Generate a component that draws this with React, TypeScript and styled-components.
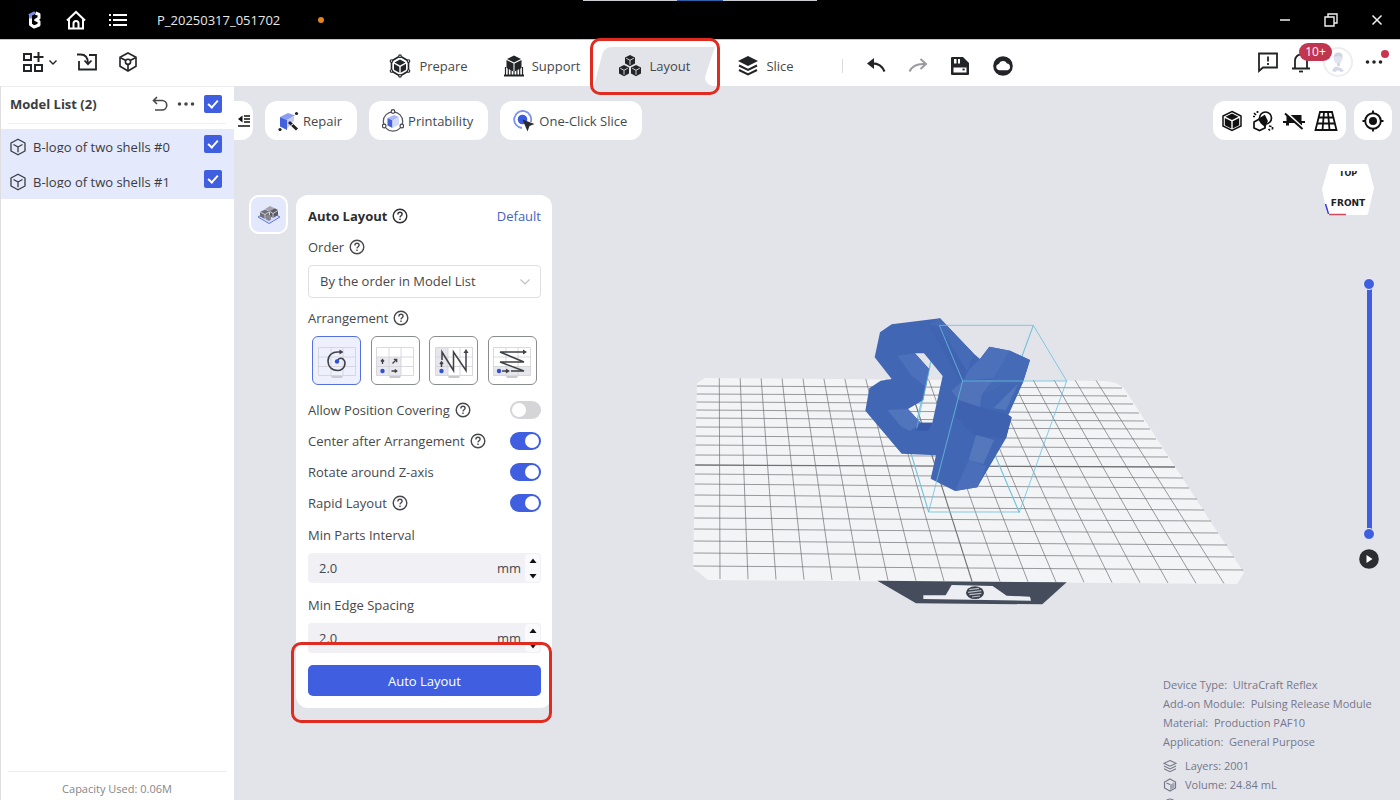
import React, { useState } from "react";
import styled, { createGlobalStyle, css } from "styled-components";

const blue = "#3f5fe0";
const ink = "#232427";
const canvas = "#e3e4ea";

const GlobalStyle = createGlobalStyle`
  *, *::before, *::after { box-sizing: border-box; }
  body { margin: 0; font-family: "Open Sans", "Noto Sans", sans-serif; font-size: 13px; line-height: 18px; color: #47484c; background: ${canvas}; }
  button, input, select { font: inherit; color: inherit; margin: 0; }
  button { border: 0; background: none; padding: 0; cursor: pointer; display: inline-flex; align-items: center; justify-content: center; }
  svg { display: block; flex: none; }
  h1, h2, p, ul, dl, dd { margin: 0; padding: 0; }
`;

const Shell = styled.div`
  height: 100vh;
  display: flex;
  flex-direction: column;
  overflow: hidden;
`;

const TitleBar = styled.header`
  position: relative;
  flex: none;
  height: 39px;
  display: flex;
  align-items: center;
  background: #000;
  color: #e8e8e8;
  padding: 0 16px 0 26px;
`;

const CaptureStrip = styled.div`
  position: absolute;
  top: 0;
  left: 50%;
  width: 234px;
  height: 1px;
  margin-left: -117px;
  background: linear-gradient(90deg, #c9cdd1 40%, #2d5fa8 40%, #2d5fa8 60%, #c9cdd1 60%);
`;

const TitleActions = styled.div`
  display: flex;
  align-items: center;
  gap: 21px;
  color: #fff;
`;

const ProjectName = styled.h1`
  font-size: 13px;
  font-weight: 400;
  margin-left: 29px;
`;

const UnsavedDot = styled.span`
  width: 6px;
  height: 6px;
  border-radius: 50%;
  background: #e58420;
  margin-left: 38px;
`;

const WindowActions = styled.div`
  display: flex;
  gap: 32px;
  margin-left: auto;
  color: #f2f2f2;
`;

const Toolbar = styled.div`
  position: relative;
  z-index: 2;
  flex: none;
  height: 47px;
  display: grid;
  grid-template-columns: 1fr auto 1fr;
  background: #fff;
  border-top: 1px solid #c8c8c8;
  color: ${ink};
`;

const FileTools = styled.div`
  display: flex;
  align-items: center;
  gap: 18px;
  padding: 0 0 2px 22px;
`;

const MainNav = styled.nav`
  display: flex;
  align-items: flex-end;
  padding-right: 19px;
`;

const Tab = styled.button<{ $active?: boolean }>`
  position: relative;
  height: 39px;
  gap: 8px;
  padding: 0 14px 1px 22px;
  color: #47484c;
  ${(p) => p.$active && css`padding: 0 26px 1px 25px;`}
  svg { position: relative; color: ${ink}; }
`;

const TabShape = styled.span`
  position: absolute;
  inset: 0;
  svg { width: 100%; height: 100%; }
  & ~ span { position: relative; }
`;

const Highlight = styled.i<{ $inset: string }>`
  position: absolute;
  z-index: 3;
  inset: ${(p) => p.$inset};
  border: 3px solid #df2b20;
  border-radius: 10px;
  pointer-events: none;
`;

const QuickActions = styled.div`
  display: flex;
  align-items: center;
  gap: 22px;
  height: 39px;
  margin-left: 34px;
  padding: 0 0 1px 24px;
  background: linear-gradient(#dcdcdc, #dcdcdc) no-repeat left 12px / 1px 14px;
`;

const AccountTools = styled.div`
  display: flex;
  align-items: center;
  justify-content: flex-end;
  gap: 12px;
  padding: 0 17px 2px 0;
`;

const Badged = styled.button`
  position: relative;
`;

const CountBadge = styled.span`
  position: absolute;
  z-index: 1;
  left: 8px;
  top: -8px;
  width: 33px;
  border-radius: 9px;
  background: #c2354f;
  color: #fff;
  font-size: 12px;
`;

const AlertDot = styled.span`
  position: absolute;
  right: -6px;
  top: -3px;
  width: 8px;
  height: 8px;
  border-radius: 50%;
  background: #c9354f;
`;

const Avatar = styled.button`
  width: 30px;
  height: 30px;
  border: 2px solid #ededf2;
  border-radius: 50%;
`;

const Body = styled.div`
  flex: 1;
  min-height: 0;
  display: grid;
  grid-template-columns: 234px 1fr;
`;

const Sidebar = styled.aside`
  display: flex;
  flex-direction: column;
  min-height: 0;
  background: #fff;
  border-top: 1px solid #ededed;
  border-left: 1px solid #dedee2;
`;

const SidebarHead = styled.div`
  display: flex;
  align-items: center;
  gap: 9px;
  height: 37px;
  margin: 0 8px 5px 7px;
  padding: 0 4px 2px 2px;
  border-bottom: 1px solid #f0f0f0;
  h2 { flex: 1; font-size: 13px; font-weight: 700; color: #3b3c40; }
`;

const Check = styled.input`
  appearance: none;
  position: relative;
  flex: none;
  width: 18px;
  height: 18px;
  border-radius: 2px;
  background: ${blue};
  &:not(:checked) { background: #fff; border: 1px solid #b8bac4; }
  &:checked::after {
    content: "";
    position: absolute;
    left: 6px;
    top: 3px;
    width: 6px;
    height: 10px;
    border: solid #fff;
    border-width: 0 2px 2px 0;
    transform: rotate(42deg);
  }
`;

const ModelRow = styled.label`
  display: flex;
  align-items: center;
  gap: 6px;
  height: 35px;
  padding: 0 12px 0 8px;
  background: #e4e9fb;
  color: #3a3b41;
  ${Check} { margin-bottom: 5px; }
`;

const ModelName = styled.span`
  flex: 1;
  height: 13px;
  line-height: 14px;
  overflow: hidden;
  white-space: nowrap;
`;

const Capacity = styled.p`
  margin: auto 8px 0 7px;
  height: 29px;
  padding-top: 8px;
  border-top: 1px solid #ececec;
  font-size: 11px;
  text-align: center;
  color: #85868a;
`;

const Viewport = styled.main`
  display: grid;
  grid-template: minmax(0, 1fr) / minmax(0, 1fr);
  min-height: 0;
  background: ${canvas};
`;

const SceneLayer = styled.svg`
  grid-area: 1 / 1;
  width: 100%;
  height: 100%;
`;

const Overlay = styled.div`
  grid-area: 1 / 1;
  position: relative;
  display: flex;
  flex-direction: column;
  gap: 24px;
  padding: 15px 8px 0 0;
  min-height: 0;
`;

const ActionRow = styled.div`
  display: flex;
  gap: 12px;
`;

const Collapse = styled.button`
  width: 19px;
  height: 39px;
  background: #fff;
  border-radius: 0 12px 12px 0;
  color: #111;
`;

const Pill = styled.button`
  height: 39px;
  gap: 4px;
  padding: 0 15px 0 13px;
  border-radius: 12px;
  background: #fff;
  white-space: nowrap;
`;

const ViewTools = styled.div`
  display: flex;
  gap: 8px;
  margin-left: auto;
`;

const ToolGroup = styled.div`
  display: flex;
  align-items: center;
  gap: 9px;
  height: 39px;
  padding: 0 8px;
  border-radius: 12px;
  background: #fff;
  color: #111;
`;

const Workspace = styled.div`
  display: flex;
  justify-content: space-between;
  align-items: flex-start;
`;

const ToolArea = styled.div`
  display: flex;
  align-items: flex-start;
  gap: 8px;
  padding: 31px 0 0 15px;
`;

const ToolButton = styled.button`
  width: 39px;
  height: 39px;
  border: 2px solid #fff;
  border-radius: 10px;
  background: #e3e8fc;
`;

const Panel = styled.form`
  width: 256px;
  border-radius: 12px;
  background: #fff;
  padding: 0 11px 0 12px;
`;

const PanelHead = styled.div`
  display: flex;
  align-items: center;
  justify-content: space-between;
  height: 37px;
  padding-top: 5px;
  button { color: #4661c6; }
`;

const Caption = styled.div<{ $strong?: boolean }>`
  display: flex;
  align-items: center;
  gap: 5px;
  ${(p) => p.$strong && css`font-weight: 700; color: #2c2d31;`}
`;

const FieldLabel = styled(Caption)`
  height: 33px;
  padding-bottom: 3px;
`;

const SelectBox = styled.div`
  display: grid;
  align-items: center;
  margin-bottom: 5px;
  select, svg { grid-area: 1 / 1; }
  svg { justify-self: end; margin-right: 11px; pointer-events: none; }
`;

const Select = styled.select`
  appearance: none;
  width: 100%;
  height: 33px;
  padding: 0 11px 1px;
  border: 1px solid #dfdfe3;
  border-radius: 4px;
  background: #fff;
`;

const Tiles = styled.div`
  display: flex;
  justify-content: space-between;
  padding: 0 4px;
  margin-bottom: 9px;
`;

const Tile = styled.label`
  display: grid;
  place-items: center;
  width: 49px;
  height: 49px;
  border: 1px solid #8b8c90;
  border-radius: 6px;
  input { grid-area: 1 / 1; appearance: none; width: 100%; height: 100%; }
  svg { grid-area: 1 / 1; }
  &:has(input:checked) { border-color: #5570e0; background: #eef1fd; }
`;

const SwitchList = styled.div`
  margin-bottom: 2px;
`;

const SwitchRow = styled.div`
  display: flex;
  align-items: center;
  justify-content: space-between;
  height: 31px;
`;

const Switch = styled.input`
  appearance: none;
  width: 31px;
  height: 18px;
  padding: 2px;
  border-radius: 9px;
  background: #d5d5d8;
  &::before {
    content: "";
    display: block;
    width: 14px;
    height: 14px;
    border-radius: 50%;
    background: #fff;
  }
  &:checked { background: ${blue}; }
  &:checked::before { margin-left: auto; }
`;

const NumberBox = styled.div`
  display: flex;
  align-items: center;
  height: 30px;
  margin-bottom: 7px;
  border-radius: 4px;
  background: #f0f0f5;
  input { flex: 1; min-width: 0; padding: 0 11px; border: 0; background: none; }
`;

const Stepper = styled.div`
  display: grid;
  align-content: space-between;
  width: 15px;
  height: 28px;
  margin: 0 1px 0 4px;
  padding: 4px 0 3px;
  border-radius: 4px;
  background: #fafafc;
  color: #111;
`;

const PanelFoot = styled.div`
  position: relative;
  padding: 5px 0 12px;
`;

const Primary = styled.button`
  width: 100%;
  height: 31px;
  border-radius: 5px;
  background: ${blue};
  color: #fff;
`;

const RightRail = styled.div`
  display: flex;
  flex-direction: column;
  align-items: flex-end;
`;

const CubeButton = styled.button`
  margin: 0 17px 62px 0;
`;

const LayerRange = styled.div`
  display: grid;
  justify-items: center;
  width: 22px;
  height: 262px;
  margin: 0 12px 8px 0;
  background: linear-gradient(${blue}, ${blue}) no-repeat center / 5px 250px;
`;

const LayerHandle = styled.input`
  grid-area: 1 / 1;
  appearance: none;
  writing-mode: vertical-lr;
  direction: rtl;
  width: 12px;
  height: 262px;
  background: none;
  pointer-events: none;
  &::-webkit-slider-thumb {
    appearance: none;
    width: 12px;
    height: 12px;
    border: 1px solid #f2f3fb;
    border-radius: 50%;
    background: ${blue};
    pointer-events: auto;
  }
`;

const PlayButton = styled.button`
  margin: 0 12px 105px 0;
`;

const Info = styled.div`
  min-width: 214px;
  margin-right: 15px;
  font-size: 11px;
  line-height: 19px;
  color: #75778a;
  white-space: pre;
`;

const Details = styled.div`
  margin-bottom: 5px;
`;

const Stat = styled.div`
  display: flex;
  align-items: center;
  gap: 8px;
  height: 19px;
`;

const IconBase = ({ s = 22, children, sw = 2, h }: { s?: number; h?: number; sw?: number; children: React.ReactNode }) => (
  <svg width={s} height={h ?? s} viewBox={`0 0 ${s} ${h ?? s}`} fill="none" stroke="currentColor" strokeWidth={sw} aria-hidden="true">
    {children}
  </svg>
);

const HelpIcon = () => (
  <IconBase s={16} sw={1.4}>
    <circle cx="8" cy="8" r="6.8" />
    <path d="M5.9 6.4c0-1.3.9-2.1 2.1-2.1s2.1.8 2.1 1.9c0 1.5-2 1.6-2.1 3.2" />
    <path d="M8 10.6v1.4" />
  </IconBase>
);

const OutlineCube = ({ s = 18 }: { s?: number }) => (
  <svg width={s} height={s} viewBox="0 0 18 18" fill="none" stroke="currentColor" strokeWidth="1.3" strokeLinejoin="round" aria-hidden="true">
    <path d="M9 1.2 16 5v8l-7 3.8L2 13V5z" />
    <path d="M4.5 6.5 9 9l4.5-2.5M9 9v5.2" />
  </svg>
);

const DotsIcon = () => (
  <svg width="18" height="18" viewBox="0 0 18 18" fill="currentColor" aria-hidden="true">
    <circle cx="2.5" cy="9" r="1.8" /><circle cx="9" cy="9" r="1.8" /><circle cx="15.5" cy="9" r="1.8" />
  </svg>
);

const PrepareIcon = () => (
  <IconBase s={22} h={24} sw={1.6}>
    <path d="M11 2 19.5 7v10L11 22 2.500 17V7z" />
    <path d="M11 5.500 16.500 8.500 11 11.500 5.500 8.500zM5 9.700 10.300 12.700v6.100L5 15.800zM17 9.700l-5.300 3v6.100l5.300-3z" fill="currentColor" stroke="none" />
    <g fill="#fff" strokeWidth="1.100">
      <circle cx="11" cy="2.200" r="1.300" /><circle cx="19.500" cy="7" r="1.300" /><circle cx="19.500" cy="17" r="1.300" />
      <circle cx="11" cy="21.800" r="1.300" /><circle cx="2.500" cy="17" r="1.300" /><circle cx="2.500" cy="7" r="1.300" />
    </g>
  </IconBase>
);

const SupportIcon = () => (
  <IconBase s={20} h={22} sw={1.2}>
    <path d="M10 .5 17 4 10 7.500 3 4z" fill="currentColor" stroke="none" />
    <path d="M2.500 5 9.500 8.400v8L2.500 13zM17.500 5l-7 3.400v8l7-3.400z" fill="currentColor" stroke="none" />
    <path d="M1.500 20V12M4.300 20v-7M7.100 20v-5M10 20v-4M12.900 20v-5M15.700 20v-7M18.500 20v-8" />
    <path d="M0 20.500h20" strokeWidth="2" />
  </IconBase>
);

const MiniCube = ({ x, y }: { x: number; y: number }) => (
  <g transform={`translate(${x} ${y})`}>
    <path d="M5 0 10 2.500v6L5 11.200 0 8.500v-6z" fill="currentColor" stroke="none" />
    <path d="M1.200 3.200 5 5.300l3.800-2.100M5 5.300v4.500" stroke={canvas} strokeWidth=".9" />
  </g>
);

const LayoutIcon = () => (
  <IconBase s={22}>
    <MiniCube x={6} y={0} /><MiniCube x={0} y={10} /><MiniCube x={12} y={10} />
  </IconBase>
);

const SliceIcon = () => (
  <IconBase s={20} h={22} sw={2}>
    <path d="M10 1 20 6 10 11 0 6z" fill="currentColor" stroke="none" />
    <path d="M1 10.500 10 15l9-4.500M1 15l9 4.500 9-4.500" />
  </IconBase>
);

const TAB_ITEMS = [
  { name: "Prepare", icon: <PrepareIcon /> },
  { name: "Support", icon: <SupportIcon /> },
  { name: "Layout", icon: <LayoutIcon /> },
  { name: "Slice", icon: <SliceIcon /> },
];

const TileGrid = ({ shade, children }: { shade?: React.ReactNode; children: React.ReactNode }) => (
  <svg width="40" height="40" viewBox="0 0 40 40" fill="none" aria-hidden="true">
    {shade}
    <path d="M1.500 6.500h37v28h-37zM1.500 16h37M1.500 25.500h37M14 6.500v28M26 6.500v28" stroke="#cfd0d6" strokeWidth=".8" />
    <path d="M14 35h12l-1 2H15z" fill="#c9cad0" />
    <g stroke="#404146" strokeWidth="1.300">{children}</g>
  </svg>
);

const Scene = () => {
  const columns = Array.from({ length: 19 }, (_, i) => i);
  const leftY = [386, 394, 402, 410, 418, 427, 436, 445, 455, 465, 474, 484, 495, 506, 518, 529, 541, 553, 566];
  const rightY = [388, 396, 404, 413, 421, 429, 439, 448, 457, 467, 478, 488, 499, 510, 521, 533, 545, 557, 570];
  const rightX = [1122, 1127, 1133, 1139, 1144, 1150, 1156, 1162, 1168, 1175, 1183, 1189, 1197, 1204, 1211, 1218, 1227, 1234, 1243];
  return (
    <SceneLayer viewBox="234 86 1166 714" role="img" aria-label="Model on the build plate">
      <path d="M697 383 705 378 1104 381 1116 383 1124 388 1244 573 1237 584 708 580 693 568z" fill="#f3f4f6" />
      <g stroke="#707175">
        {columns.map((i) => (
          <path key={i} d={`M${719.3 + i * 20.93} ${378.200 + i * 0.12}L${720 + i * 28} ${579 + i * 0.25}`} strokeWidth={i === 9 ? 1.1 : 0.7} />
        ))}
        {columns.map((i) => (
          <path key={i} d={`M${697 - i * 0.2} ${leftY[i]}L${rightX[i]} ${rightY[i]}`} strokeWidth={i === 9 ? 1.3 : 0.7} />
        ))}
      </g>
      <g transform="translate(680 300) scale(.33333)">
        <path d="M592 842 1160 847 1087 913 708 910z" fill="#454d5c" />
        <path d="M815 855 938 858 980 887 1050 890 1053 902 730 897 730 886 797 886z" fill="#eceef3" />
        <ellipse cx="885" cy="878" rx="27" ry="19" fill="#3b414c" />
        <path d="M868 869 897 865M864 877 904 872M868 884 904 880M876 891 900 888" stroke="#b9bdc6" strokeWidth="3.500" />
        <path d="M778 76 690 450 746 636M1060 76 930 430 1018 638M690 450H930" stroke="#74c4dc" strokeWidth="3.500" fill="none" />
        <path
          fillRule="evenodd"
          fill="#4166b4"
          d="M600 97 635 73 780 55 880 160 900 177 928 140 990 152 1050 180 1028 250 985 345 995 352 978 415 892 562 825 573 752 536 768 466 665 461 556 332 568 265 602 242 635 237 584 172zM705 160 748 208 730 300 684 327 722 368 757 368 788 228 732 160z"
        />
        <path d="M705 160 748 208 738 262 694 226 652 167z" fill="#4c70bc" />
        <path d="M684 327 722 368 690 393 662 378 622 330z" fill="#5175bd" />
        <path d="M780 55 880 160 862 214 745 74z" fill="#456ab6" />
        <path d="M745 74 780 80 862 214 838 240z" fill="#3e62af" opacity=".7" />
        <path d="M928 140 990 152 940 235 850 243 868 208 900 177z" fill="#4c70ba" />
        <path d="M990 152 1050 180 1028 250 962 255 910 290 940 235z" fill="#466bb6" />
        <path d="M848 243 940 240 905 285 900 322 835 300 815 272z" fill="#5073b9" />
        <path d="M1015 250 978 330 940 325 955 280z" fill="#5377bd" />
        <path d="M965 255 1015 250 940 325 905 322 912 285z" fill="#4267b4" />
        <path d="M835 300 900 322 985 345 995 352 978 415 880 405 828 350z" fill="#3e62af" />
        <path d="M888 405 942 420 910 492 866 480z" fill="#5578bd" />
        <path d="M866 480 920 498 892 562 825 573z" fill="#4a6eb9" />
        <path d="M722 368 757 368 745 392 706 392z" fill="#385cab" />
        <path d="M778 76H1060L1160 243H848zM848 243 746 636H1018L1160 243" stroke="#66c0dd" strokeWidth="3" fill="none" opacity=".8" />
        <path d="M750 200 710 385" stroke="#66c0dd" strokeWidth="3" opacity=".7" />
      </g>
    </SceneLayer>
  );
};

const SWITCHES = [
  { id: "covering", label: "Allow Position Covering", help: true, on: false },
  { id: "center", label: "Center after Arrangement", help: true, on: true },
  { id: "rotate", label: "Rotate around Z-axis", help: false, on: true },
  { id: "rapid", label: "Rapid Layout", help: true, on: true },
];

const ARRANGEMENTS = [
  {
    name: "Spiral from center",
    art: (
      <TileGrid>
        <path d="M20 21.500c0-3 3-5.500 6-3.500 3.500 3 2.500 11-5.500 11.500-6 0-9.500-4-9.500-9.500 0-6 4.500-9 9.500-9h4" strokeWidth="1.600" />
        <path d="M22.500 8.500v5l4-2.500z" fill="#404146" stroke="none" />
        <circle cx="20" cy="20.500" r="2.200" fill="#3150d8" stroke="none" />
      </TileGrid>
    ),
  },
  {
    name: "Outward from corner",
    art: (
      <TileGrid shade={<path d="M1.500 16H26v18.500H1.500z" fill="#e9e9ee" />}>
        <circle cx="7.500" cy="30" r="2.200" fill="#3150d8" stroke="none" />
        <path d="M7.500 23v-4M6 20.500l1.500-2 1.500 2M16.500 30h5M19.800 28.500l2 1.500-2 1.500M17.500 22.500l4-4M18.800 18.300h2.900v2.900" />
      </TileGrid>
    ),
  },
  {
    name: "Column by column",
    art: (
      <TileGrid shade={<path d="M1.500 6.500H14v28H1.500z" fill="#e6e6ec" />}>
        <circle cx="7.500" cy="30" r="2.200" fill="#3150d8" stroke="none" />
        <path d="M7.500 26V21M6 23l1.500-2 1.500 2M8 19V11l11.500 18.500V11L32 29.500V10" strokeWidth="1.500" />
        <path d="M29.500 12 32 8l2.500 4z" fill="#404146" stroke="none" />
      </TileGrid>
    ),
  },
  {
    name: "Row by row",
    art: (
      <TileGrid shade={<path d="M1.500 25.500h37v9h-37z" fill="#e6e6ec" />}>
        <circle cx="7" cy="30" r="2.200" fill="#3150d8" stroke="none" />
        <path d="M10 30h6M14 28.500l2.500 1.500-2.500 1.500M19 30h13L8 21h24L8 11h25" strokeWidth="1.500" />
        <path d="M31 8.500 35 11l-4 2.500z" fill="#404146" stroke="none" />
      </TileGrid>
    ),
  },
];

const NumberField = ({ id, label }: { id: string; label: string }) => {
  const [value, setValue] = useState("2.0");
  const step = (d: number) => setValue((parseFloat(value) + d).toFixed(1));
  return (
    <>
      <FieldLabel as="label" htmlFor={id}>{label}</FieldLabel>
      <NumberBox>
        <input id={id} inputMode="decimal" value={value} onChange={(e) => setValue(e.target.value)} />
        <span>mm</span>
        <Stepper>
          <button type="button" aria-label={`Increase ${label}`} onClick={() => step(0.1)}>
            <svg width="8" height="5" viewBox="0 0 8 5" fill="currentColor"><path d="M.5 5h7L4 .5z" /></svg>
          </button>
          <button type="button" aria-label={`Decrease ${label}`} onClick={() => step(-0.1)}>
            <svg width="8" height="5" viewBox="0 0 8 5" fill="currentColor"><path d="M.5 0h7L4 4.500z" /></svg>
          </button>
        </Stepper>
      </NumberBox>
    </>
  );
};

const AutoLayoutPanel = () => (
  <Panel onSubmit={(e) => e.preventDefault()}>
    <PanelHead>
      <Caption $strong>Auto Layout <HelpIcon /></Caption>
      <button type="button">Default</button>
    </PanelHead>
    <FieldLabel><label htmlFor="order">Order</label> <HelpIcon /></FieldLabel>
    <SelectBox>
      <Select id="order"><option>By the order in Model List</option></Select>
      <svg width="10" height="6" viewBox="0 0 10 6" fill="none" stroke="#bfc0c4" strokeWidth="1.200"><path d="M.5.5 5 5 9.500.5" /></svg>
    </SelectBox>
    <FieldLabel>Arrangement <HelpIcon /></FieldLabel>
    <Tiles>
      {ARRANGEMENTS.map((a, i) => (
        <Tile key={a.name}>
          <input type="radio" name="arrangement" aria-label={a.name} defaultChecked={i === 0} />
          {a.art}
        </Tile>
      ))}
    </Tiles>
    <SwitchList>
      {SWITCHES.map((s) => (
        <SwitchRow key={s.id}>
          <Caption><label htmlFor={s.id}>{s.label}</label>{s.help && <HelpIcon />}</Caption>
          <Switch type="checkbox" role="switch" id={s.id} defaultChecked={s.on} />
        </SwitchRow>
      ))}
    </SwitchList>
    <NumberField id="interval" label="Min Parts Interval" />
    <NumberField id="edge" label="Min Edge Spacing" />
    <PanelFoot>
      <Primary type="submit">Auto Layout</Primary>
      <Highlight $inset="-18px -11px -15px -17px" />
    </PanelFoot>
  </Panel>
);

export default function App() {
  return (
    <Shell>
      <GlobalStyle />
      <TitleBar>
        <CaptureStrip />
        <TitleActions>
          <button aria-label="Application menu">
            <svg width="18" height="20" viewBox="0 0 18 20" fill="none" strokeWidth="3" strokeLinejoin="round">
              <path d="M4.500 7.500V14.500L8 17l5-2v-3.500L10 10l3-2V4.500L9.500 3" stroke="#fff" />
              <path d="M3 5.500 9 2.500M4.500 8.500V5" stroke="#7c8fe8" />
              <path d="M8.500 10h3" stroke="#fff" strokeWidth="2" />
            </svg>
          </button>
          <button aria-label="Home">
            <IconBase s={22} h={20} sw={2}>
              <path d="M2 10.500 11 2l9 8.500M4 9v9.500h14V9" /><path d="M8.500 18.500V13.500a2.500 2.500 0 0 1 5 0v5" />
            </IconBase>
          </button>
          <button aria-label="Project list">
            <IconBase s={20} h={14} sw={1.800}>
              <path d="M5 2h14M5 7h14M5 12h14M1 2h2M1 7h2M1 12h2" />
            </IconBase>
          </button>
        </TitleActions>
        <ProjectName>P_20250317_051702</ProjectName>
        <UnsavedDot />
        <WindowActions>
          <button aria-label="Minimize"><IconBase s={14} sw={1.500}><path d="M2 7h10" /></IconBase></button>
          <button aria-label="Restore"><IconBase s={14} sw={1.400}><path d="M1 4h9v9H1zM4 4V1h9v9h-3" /></IconBase></button>
          <button aria-label="Close"><IconBase s={14} sw={1.500}><path d="M2.500 2.500l9 9M11.500 2.500l-9 9" /></IconBase></button>
        </WindowActions>
      </TitleBar>

      <Toolbar>
        <FileTools>
          <button aria-label="Add from library">
            <svg width="37" height="22" viewBox="0 0 37 22" fill="none" stroke="currentColor" strokeWidth="2" aria-hidden="true">
              <path d="M2 3h7v6H2zM2 14h7v6H2zM13 14h7v6h-7zM16.500 1v10M11.500 6h10" />
              <path d="M27.500 9.500 31 13l3.500-3.500" strokeWidth="1.400" />
            </svg>
          </button>
          <button aria-label="Import">
            <IconBase s={22} h={20} sw={1.800}>
              <path d="M12 3h7v14.500H2V9" /><path d="M0 2.500h3.500c4.500 0 7.500 3 7.500 9M7.500 8.500l3.500 3.700L14.500 8.500" />
            </IconBase>
          </button>
          <button aria-label="Model library">
            <IconBase s={22} sw={1.600}>
              <path d="M11 2 19 6.200v9L11 20l-8-4.800v-9z" /><path d="M3.500 6.800 9 9.500M18.500 6.800 13 9.500M11 13.500V19" /><circle cx="11" cy="10.800" r="2.600" />
            </IconBase>
          </button>
        </FileTools>

        <MainNav>
          {TAB_ITEMS.map((t) => {
            const active = t.name === "Layout";
            return (
              <Tab key={t.name} $active={active} aria-current={active ? "page" : undefined}>
                {active && (
                  <TabShape>
                    <svg viewBox="0 0 121 39" preserveAspectRatio="none">
                      <path d="M0 39 8 8Q10 0 18 0H120L111 27Q108 36 118 39z" fill={canvas} />
                    </svg>
                  </TabShape>
                )}
                {t.icon}
                <span>{t.name}</span>
                {active && <Highlight $inset="-9px -4px" />}
              </Tab>
            );
          })}
          <QuickActions>
            <button aria-label="Undo">
              <IconBase s={20} sw={2.200}><path d="M5 7.500c7-.5 11 2 13.500 8" /><path d="M8 2v11L1 7.500z" fill="currentColor" stroke="none" /></IconBase>
            </button>
            <button aria-label="Redo">
              <svg width="20" height="20" viewBox="0 0 20 20" fill="none" stroke="#9b9b9e" strokeWidth="2"><path d="M1.500 15.500C4 10 9 7.500 17 8M12.500 3l5.500 5-5.500 5" /></svg>
            </button>
            <button aria-label="Save">
              <svg width="20" height="20" viewBox="0 0 20 20" aria-hidden="true">
                <path d="M2 1h11l6 6v11a1 1 0 0 1-1 1H2a1 1 0 0 1-1-1V2a1 1 0 0 1 1-1z" fill="currentColor" />
                <path d="M4 3h2.500v4.500H4zM8 3h2v4.500H8zM3.500 11.500h13v5h-13z" fill="#fff" /><path d="M12.500 13.500h2.200" stroke="#232427" strokeWidth="1.800" />
              </svg>
            </button>
            <button aria-label="Cloud">
              <svg width="22" height="20" viewBox="0 0 22 20" aria-hidden="true">
                <circle cx="11" cy="10" r="9.800" fill="currentColor" />
                <path d="M7 14.200a3.200 3.200 0 0 1-.2-6.300A4.500 4.500 0 0 1 15 7.500a3.400 3.400 0 0 1 .4 6.700z" fill="#fff" />
              </svg>
            </button>
          </QuickActions>
        </MainNav>

        <AccountTools>
          <button aria-label="Feedback">
            <IconBase s={22} sw={1.800}><path d="M2 2.500h18v14H6L2 20z" /><path d="M11 5.500v5M11 12v2" /></IconBase>
          </button>
          <Badged aria-label="Notifications">
            <IconBase s={20} h={22} sw={1.800}><path d="M4 17.500V9.500a6 6 0 0 1 12 0v8M1 17.500h18M10 1.500v2" /><path d="M8 20.500h4" /></IconBase>
            <CountBadge>10+</CountBadge>
          </Badged>
          <Avatar aria-label="Account">
            <svg width="18" height="22" viewBox="0 0 18 22" aria-hidden="true">
              <ellipse cx="9" cy="7" rx="4.500" ry="5.500" fill="#e1e4ee" /><path d="M4.500 6Q6 1 10 1.500t3.500 4.500L9 5z" fill="#cfd3e2" />
              <path d="M8 12h3v3H8zM3 20q2-5 6-4t6 4l-3 1-3-2-3 2z" fill="#d3d7e6" />
            </svg>
          </Avatar>
          <Badged aria-label="More"><DotsIcon /><AlertDot /></Badged>
        </AccountTools>
      </Toolbar>

      <Body>
        <Sidebar>
          <SidebarHead>
            <h2>Model List (2)</h2>
            <button aria-label="Revert"><IconBase s={16} sw={1.600}><path d="M5 1 1.500 4.500 5 8M1.500 4.500h8.500a4.700 4.700 0 0 1 0 9.500H3" /></IconBase></button>
            <button aria-label="List options"><DotsIcon /></button>
            <Check type="checkbox" defaultChecked aria-label="Select all models" />
          </SidebarHead>
          {["B-logo of two shells #0", "B-logo of two shells #1"].map((name) => (
            <ModelRow key={name}>
              <OutlineCube />
              <ModelName>{name}</ModelName>
              <Check type="checkbox" defaultChecked />
            </ModelRow>
          ))}
          <Capacity>Capacity Used: 0.06M</Capacity>
        </Sidebar>

        <Viewport>
          <Scene />
          <Overlay>
            <ActionRow>
              <Collapse aria-label="Collapse model list">
                <svg width="14" height="14" viewBox="0 0 14 14" fill="none" stroke="currentColor" strokeWidth="1.600">
                  <path d="M7 2h6M7 5h6M7 8h6M1 12h12" /><path d="M5.500 1.500v7L1 5z" fill="currentColor" stroke="none" />
                </svg>
              </Collapse>
              <Pill>
                <svg width="21" height="22" viewBox="0 0 21 22" aria-hidden="true">
                  <path d="M2 7 10 3l7 2.500L9 10z" fill="#8c9df0" /><path d="M2 7 9 10v10L2 16.500z" fill="#4261df" /><path d="M9 10l7-4v5l-3 3-4 5z" fill="#c3ccf8" />
                  <path d="M11 12l8 7.500" stroke="#222" strokeWidth="3" /><path d="M13 15.500l2.500-2" stroke="#fff" strokeWidth="1" />
                  <circle cx="18.500" cy="3.500" r="1.600" fill="#222" /><circle cx="2" cy="19.500" r="1.600" fill="#222" />
                </svg>
                Repair
              </Pill>
              <Pill>
                <svg width="22" height="24" viewBox="0 0 22 24" aria-hidden="true">
                  <circle cx="11" cy="12.500" r="9.700" fill="none" stroke="#55575e" strokeWidth="1.300" />
                  <path d="M5.500 9 12 6l5 2-6.500 3.500z" fill="#aab6f6" /><path d="M5.500 9l5 2.500V19l-5-2.500z" fill="#4261df" /><path d="M10.500 11.500 17 8v7.500L10.500 19z" fill="#d3d9fb" />
                  <g fill="#fff" stroke="#44464c" strokeWidth="1.200"><circle cx="11" cy="2.500" r="1.800" /><circle cx="2.200" cy="17" r="1.800" /><circle cx="19.800" cy="17" r="1.800" /></g>
                </svg>
                Printability
              </Pill>
              <Pill>
                <svg width="22" height="22" viewBox="0 0 22 22" aria-hidden="true">
                  <path d="M17.800 12A8.500 8.500 0 1 0 9 18" fill="none" stroke="#7e92ee" strokeWidth="1.800" />
                  <circle cx="9.500" cy="9.500" r="4.800" fill="#3a5ae0" /><path d="M9.500 9.500 21.500 14l-5 2-2 5.500z" fill="#2a2b2f" />
                </svg>
                One-Click Slice
              </Pill>
              <ViewTools>
                <ToolGroup>
                  <button aria-label="Solid view">
                    <IconBase s={22} sw={1.500}><path d="M11 1.500 20 6v10l-9 4.500L2 16V6z" /><path d="M11 3.500 17.500 6.800 11 10 4.500 6.800zM3.800 8 10.300 11.200v7.300L3.800 15.200zM18.200 8l-6.500 3.200v7.300l6.500-3.300z" fill="currentColor" stroke="none" /></IconBase>
                  </button>
                  <button aria-label="Intersection view">
                    <IconBase s={22} sw={1.700}>
                      <circle cx="13.500" cy="8" r="6" /><path d="M7.500 9 13 12v6L7.500 20.500l-5.500-2.500V12z" />
                      <path d="M7.500 9 12.500 6 15 11 13 16 9.500 13z" fill="currentColor" /><path d="M2 3l2 2M5.500 1v2M1 6.500h2M17 16l2.500.5M16.500 19l1.500 1.500M20.500 19.500v-2.500" />
                    </IconBase>
                  </button>
                  <button aria-label="Hide supports">
                    <IconBase s={22} sw={2}><path d="M3.500 5h15v6h-15zM3 11.500h3v4H3zM16 11.500h3v4h-3z" fill="currentColor" stroke="none" /><path d="M0 12h22" /><path d="M3.500 2.500 19 17" stroke="#fff" strokeWidth="2" /><path d="M2 3.500 19.500 19" /></IconBase>
                  </button>
                  <button aria-label="Show grid">
                    <IconBase s={24} h={22} sw={1.800}><path d="M6 2h12l4.500 18h-21zM4.700 7.500h14.600M3.500 13.500h17M10 2 8.500 20M14 2l1.500 18" /></IconBase>
                  </button>
                </ToolGroup>
                <ToolGroup>
                  <button aria-label="Center view">
                    <IconBase s={22} sw={1.900}><circle cx="11" cy="11" r="7.800" /><circle cx="11" cy="11" r="4" fill="currentColor" stroke="none" /><path d="M11 .5v3.500M11 18v3.500M.5 11H4M18 11h3.500" /></IconBase>
                  </button>
                </ToolGroup>
              </ViewTools>
            </ActionRow>

            <Workspace>
              <ToolArea>
                <ToolButton aria-label="Auto layout">
                  <svg width="24" height="22" viewBox="0 0 24 22" aria-hidden="true">
                    <path d="M1 13 12 7l11 6-11 6.500z" fill="#d5dbfa" stroke="#5f79e6" strokeWidth="1" />
                    <path d="M3 8 8 5.500l4 2V13L8 15 3 12.500z" fill="#707178" /><path d="M8 5 13 2l6 3-5 3z" fill="#a3a4ab" />
                    <path d="M13 7l5-2.500 3 1.500v5l-5 3-3-2z" fill="#5b5c63" /><path d="M3 8l5 2.500L12 8M8 10.500V15M13 7.500l3 2 5-3M16 9.500V14" stroke="#c8c9d2" strokeWidth="1" fill="none" />
                    <path d="M9 12l3-1.500 2 1v4L12 17l-3-1.500z" fill="#85868e" />
                  </svg>
                </ToolButton>
                <AutoLayoutPanel />
              </ToolArea>

              <RightRail>
                <CubeButton aria-label="View orientation">
                  <svg width="54" height="52" viewBox="0 0 54 52">
                    <defs><clipPath id="topFace"><rect x="0" y="7" width="54" height="6" /></clipPath></defs>
                    <path d="M8 1Q9 0 10 0H45Q46 0 47 1L53 24 47 50Q46 51 45 51H8Q7 51 6 50L1 25z" fill="#fff" />
                    <g fill="#222" fontFamily="DejaVu Sans, sans-serif" fontWeight="700" textAnchor="middle">
                      <text x="27" y="12" fontSize="8" clipPath="url(#topFace)">TOP</text>
                      <text x="27" y="42" fontSize="9">FRONT</text>
                    </g>
                    <path d="M4.500 40 7.500 50" stroke="#3a3ae0" strokeWidth="1.500" /><path d="M8 50.500H25" stroke="#d04a5c" strokeWidth="1.500" />
                  </svg>
                </CubeButton>
                <LayerRange>
                  <LayerHandle type="range" min="0" max="2001" defaultValue="2001" aria-label="Top layer" />
                  <LayerHandle type="range" min="0" max="2001" defaultValue="0" aria-label="Bottom layer" />
                </LayerRange>
                <PlayButton aria-label="Play layers">
                  <svg width="22" height="22" viewBox="0 0 22 22"><circle cx="11" cy="11" r="9.800" fill="#2c2d31" /><path d="M8.500 7 14.500 11l-6 4z" fill="#fff" /></svg>
                </PlayButton>
                <Info>
                  <Details>
                    <p>Device Type:{"  "}UltraCraft Reflex</p>
                    <p>Add-on Module:{"  "}Pulsing Release Module</p>
                    <p>Material:{"  "}Production PAF10</p>
                    <p>Application:{"  "}General Purpose</p>
                  </Details>
                  <Stat>
                    <IconBase s={14} sw={1.100}><path d="M7 1.500 13 4.300 7 7.200 1 4.300zM1 7l6 3 6-3M1 9.700l6 3 6-3" /></IconBase>
                    Layers: 2001
                  </Stat>
                  <Stat>
                    <svg width="14" height="14" viewBox="0 0 14 14" fill="none" stroke="currentColor" strokeWidth="1.200">
                      <path d="M7 1 12.500 4v6L7 13 1.500 10V4z" /><path d="M7 6.500 11.500 4.500v5L7 12z" fill="#a3a5b4" stroke="none" /><path d="M3.500 5 7 6.500" />
                    </svg>
                    Volume: 24.84 mL
                  </Stat>
                  <Stat>
                    <IconBase s={14} sw={1.100}><circle cx="7" cy="7.500" r="5.500" /><path d="M7 4.500V8l2.500 1" /></IconBase>
                  </Stat>
                </Info>
              </RightRail>
            </Workspace>
          </Overlay>
        </Viewport>
      </Body>
    </Shell>
  );
}
